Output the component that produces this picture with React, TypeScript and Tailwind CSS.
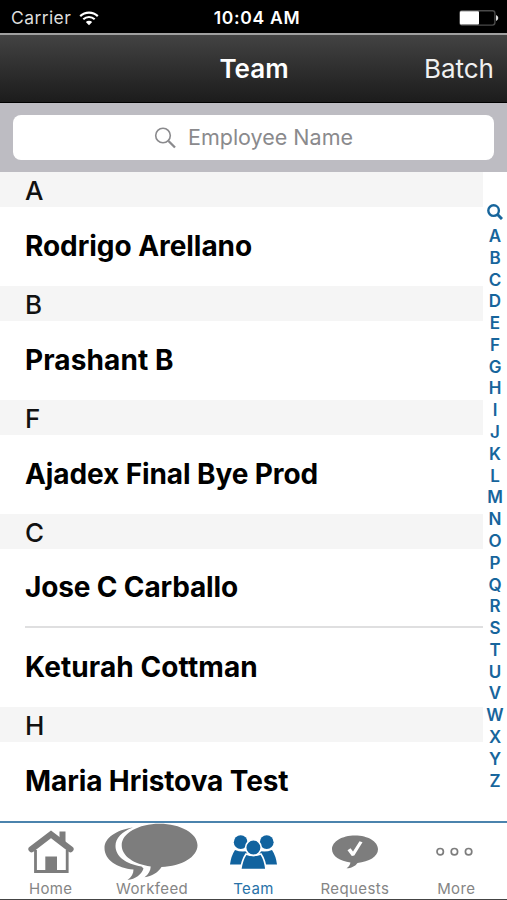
import React from 'react';

const SECTIONS = [
  { letter: 'A', people: [{ name: 'Rodrigo Arellano', spacing: 'tracking-[-0.05px]' }] },
  { letter: 'B', people: [{ name: 'Prashant B', spacing: 'tracking-[0.1px]' }] },
  { letter: 'F', people: [{ name: 'Ajadex Final Bye Prod', spacing: 'tracking-[-0.1px]' }] },
  {
    letter: 'C',
    people: [
      { name: 'Jose C Carballo', spacing: 'tracking-[-0.15px]' },
      { name: 'Keturah Cottman', spacing: 'tracking-[0.1px]' },
    ],
  },
  { letter: 'H', people: [{ name: 'Maria Hristova Test', spacing: 'tracking-[-0.1px]' }] },
];

const INDEX_LETTERS = 'ABCDEFGHIJKLMNOPQRSTUVWXYZ'.split('');

const WifiIcon = () => (
  <svg width="20" height="15" viewBox="0 0 20 15" fill="none" stroke="#fff">
    <path d="M1.2 5.1C6.2 0.4 13.8 0.4 18.8 5.1" strokeWidth="2.2" />
    <path d="M4.3 8.3C7.6 5.3 12.4 5.3 15.7 8.3" strokeWidth="2.1" />
    <path d="M10 14.2L6.8 11C8.6 9.4 11.4 9.4 13.2 11Z" fill="#fff" stroke="none" />
  </svg>
);

const BatteryIcon = () => (
  <svg width="40" height="16" viewBox="0 0 40 16">
    <rect x="0.7" y="0.7" width="35.2" height="14.4" rx="2.5" fill="none" stroke="#4a4a4a" strokeWidth="1.4" />
    <rect x="1" y="1.2" width="19" height="13.4" rx="1" fill="#fff" />
    <path d="M37 5Q39.3 6 39.3 8T37 11Z" fill="#ddd" />
  </svg>
);

const HomeIcon = () => (
  <svg width="46" height="44" viewBox="0 0 46 44" fill="none" stroke="#7d7d7d">
    <path d="M31.5 1.5H37.5V15L31.5 10Z" fill="#7d7d7d" stroke="none" />
    <path d="M7.5 20V41.5H39.2V20" strokeWidth="2.8" />
    <path d="M3.5 19.2L23 4.4L42.5 19.2" strokeWidth="6.2" strokeLinecap="round" />
    <path d="M17.3 26.5H29V42H17.3Z" fill="#7d7d7d" stroke="none" />
  </svg>
);

const WorkfeedIcon = () => (
  <svg width="96" height="58" viewBox="0 0 96 58" fill="#7d7d7d">
    <path d="M29 4.5C12 7 0.5 15 0.5 25C0.5 37 13 45 29.5 46.5C29.5 50.5 27.5 54 23.5 57C31.5 56 37.5 51.5 39.5 45.5L37.5 43.5C22 41 11.5 33.5 11.5 23C11.5 15 18 8.5 29 4.5Z" />
    <path d="M55.5 0.7C76.5 0.7 93.5 10.2 93.5 22.3C93.5 34 77.5 43.5 57.5 44C54 49.5 48 53.2 40.5 54.2C44.5 51.3 46.6 47.5 46.7 43.4C30 41.5 17.7 33 17.7 22.3C17.7 10.2 34.5 0.7 55.5 0.7Z" />
  </svg>
);

const TeamIcon = () => (
  <svg width="48" height="36" viewBox="0 0 48 36" fill="#11639f">
    <path d="M6 16Q14 19 21 16V30.5H1Q2 22 6 16Z" />
    <path d="M43 16Q35 19 28 16V30.5H48Q47 22 43 16Z" />
    <circle cx="11.7" cy="8.2" r="6.9" />
    <circle cx="37.7" cy="8.2" r="6.9" />
    <g stroke="#fff" strokeWidth="1.6">
      <path d="M17 20Q24.5 23 32 20Q36 26 37 35.5H11.7Q13 26 17 20Z" />
      <circle cx="24.4" cy="13.6" r="7.8" />
    </g>
  </svg>
);

const RequestsIcon = () => (
  <svg width="48" height="34" viewBox="0 0 48 34">
    <path
      d="M24 0.5C37 0.5 47 6.5 47 14.3C47 21.6 38 27 26.5 27.9C24.5 31 20 33.2 15.5 33.2C18 31.5 19.3 29.8 19.4 27.5C9 26.3 1 21.3 1 14.3C1 6.5 11 0.5 24 0.5Z"
      fill="#7d7d7d"
    />
    <path d="M16.5 15.2L19.5 13.3L22 16.5L28.5 6.3L31.5 7.3L23.3 20.5L20.8 21Z" fill="#fff" />
  </svg>
);

const MoreIcon = () => (
  <svg width="40" height="10" viewBox="0 0 40 10" fill="none" stroke="#7d7d7d" strokeWidth="1.7">
    <circle cx="4.2" cy="4.7" r="3.2" />
    <circle cx="18.4" cy="4.7" r="3.2" />
    <circle cx="32.6" cy="4.7" r="3.2" />
  </svg>
);

const TABS = [
  { label: 'Home', icon: HomeIcon },
  { label: 'Workfeed', icon: WorkfeedIcon },
  { label: 'Team', icon: TeamIcon, active: true },
  { label: 'Requests', icon: RequestsIcon },
  { label: 'More', icon: MoreIcon },
];

const StatusBar = () => (
  <div className="grid h-[33px] grid-cols-3 items-center bg-black pt-[3px] pr-2 pl-[11px] text-[17.5px] leading-none text-white">
    <div className="flex items-center gap-[8px]">
      <span className="tracking-[0.4px] text-[#dedede]">Carrier</span>
      <WifiIcon />
    </div>
    <span className="pl-[4px] text-center font-semibold tracking-[0.7px] whitespace-nowrap">10:04 AM</span>
    <div className="flex justify-end">
      <BatteryIcon />
    </div>
  </div>
);

const NavBar = () => (
  <div className="grid h-[70px] grid-cols-3 items-center border-t-2 border-b border-t-[#a0a0a0] border-b-black bg-linear-to-b from-[#434343] to-[#1c1c1c] pr-[13px] pl-[14px] leading-none text-white">
    <span />
    <span className="text-center text-[26px] font-semibold">Team</span>
    <span className="text-right text-[26px] text-[#f0f0f0]">Batch</span>
  </div>
);

const SearchBar = () => (
  <div className="h-[69px] bg-[#bdbcc2] pt-[12px] pr-[13px] pl-[13px]">
    <div className="flex h-[45px] items-center justify-center gap-[12px] rounded-[8px] bg-white text-[#8a8a8d]">
      <svg width="22" height="22" viewBox="0 0 22 22" fill="none" stroke="#8a8a8d">
        <circle cx="9" cy="8.5" r="7.3" strokeWidth="1.6" />
        <path d="M14.5 14L21 20.5" strokeWidth="2.3" />
      </svg>
      <span className="text-[21.5px] leading-none">Employee Name</span>
    </div>
  </div>
);

const LetterIndex = () => (
  <div className="flex w-[24px] flex-col items-center pt-[32px] text-[17px] font-semibold text-[#17659c]">
    <svg width="16" height="16" viewBox="0 0 16 16" fill="none" stroke="#17659c">
      <circle cx="6.6" cy="6.6" r="5.3" strokeWidth="2.4" />
      <path d="M10.3 10.3L15 15" strokeWidth="3" />
    </svg>
    <div className="mt-[6px] flex flex-col items-center">
      {INDEX_LETTERS.map((letter) => (
        <span key={letter} className="h-[21.79px] leading-[21.79px]">{letter}</span>
      ))}
    </div>
  </div>
);

export default function App() {
  return (
    <div className="flex h-[900px] w-[507px] flex-col overflow-hidden bg-white font-[Inter,sans-serif]">
      <StatusBar />
      <NavBar />
      <SearchBar />

      <div className="flex h-[649px]">
        <div className="w-[483px]">
          {SECTIONS.map(({ letter, people }) => (
            <section key={letter}>
              <h2 className="flex h-[35px] items-center bg-[#f5f5f5] pt-[3px] pl-[25px] text-[26px] leading-none font-medium text-[#111]">
                {letter}
              </h2>
              <div className="ml-[25px] divide-y-2 divide-[#dfdfe0]">
                {people.map(({ name, spacing }) => (
                  <div key={name} className="flex h-[79px] items-center pb-px text-[28px] leading-none font-[650] whitespace-nowrap text-black">
                    <span className={spacing}>{name}</span>
                  </div>
                ))}
              </div>
            </section>
          ))}
        </div>
        <LetterIndex />
      </div>

      <nav className="grid h-[79px] grid-cols-5 border-t-2 border-b border-t-[#4b83ad] border-b-[#444]">
        {TABS.map(({ label, icon: Icon, active }) => (
          <div key={label} className="flex flex-col items-center">
            <div className="flex h-[58px] items-center justify-center">
              <Icon />
            </div>
            <span className={`text-[15px] leading-[16px] tracking-[0.4px] ${active ? 'text-[#2872a8]' : 'text-[#858585]'}`}>
              {label}
            </span>
          </div>
        ))}
      </nav>
    </div>
  );
}
